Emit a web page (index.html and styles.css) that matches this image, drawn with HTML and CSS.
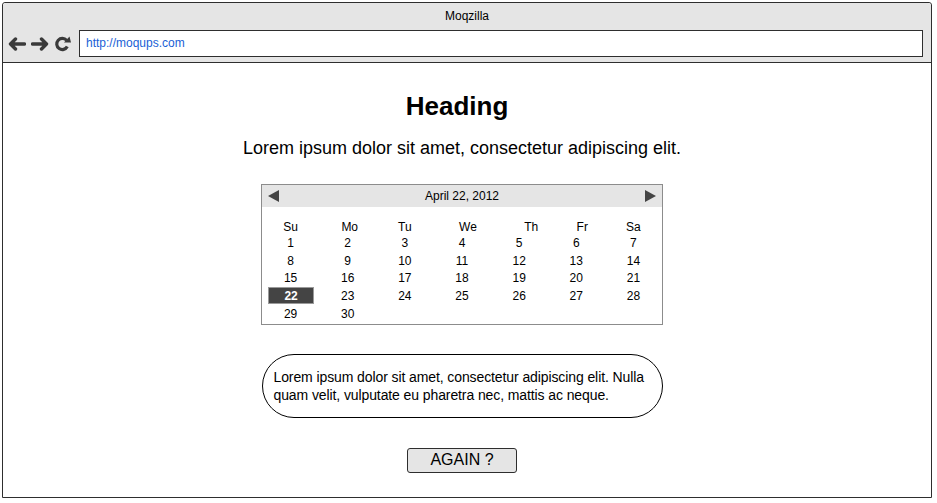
FILE: index.html
```html
<!DOCTYPE html>
<html>
<head>
<meta charset="utf-8">
<link rel="stylesheet" href="styles.css">
</head>
<body>
<div class="browser">
  <div class="chrome">
    <div class="title">Moqzilla</div>
    <div class="nav">
      <svg class="icon" width="18" height="14" viewBox="0 0 18 14"><path d="M2.5 7 L7.5 2 M2.5 7 L7.5 12 M2.5 7 L16.5 7" stroke="#3a3a3a" stroke-width="3.4" fill="none" stroke-linecap="round" stroke-linejoin="round"/></svg>
      <svg class="icon" width="18" height="14" viewBox="0 0 18 14"><path d="M15.5 7 L10.5 2 M15.5 7 L10.5 12 M15.5 7 L1.5 7" stroke="#3a3a3a" stroke-width="3.4" fill="none" stroke-linecap="round" stroke-linejoin="round"/></svg>
      <svg class="icon reload" width="18" height="16" viewBox="0 0 18 16"><path d="M13.3 10.6 A5.6 5.6 0 1 1 12.6 4.3" stroke="#3a3a3a" stroke-width="3.2" fill="none"/><path d="M10 6.5 L17 6.5 L15.5 0.5 Z" fill="#3a3a3a"/></svg>
      <div class="address">http://moqups.com</div>
    </div>
  </div>
  <div class="content">
    <h1 class="heading">Heading</h1>
    <p class="lead">Lorem ipsum dolor sit amet, consectetur adipiscing elit.</p>
    <div class="calendar">
      <div class="cal-head">
        <span class="arrow left"></span>
        <span class="month">April 22, 2012</span>
        <span class="arrow right"></span>
      </div>
      <div class="cal-grid">
        <div class="dn">Su</div><div class="dn mo">Mo</div><div class="dn">Tu</div><div class="dn we">We</div><div class="dn th">Th</div><div class="dn fr">Fr</div><div class="dn">Sa</div>
        <div>1</div><div>2</div><div>3</div><div>4</div><div>5</div><div>6</div><div>7</div>
        <div>8</div><div>9</div><div>10</div><div>11</div><div>12</div><div>13</div><div>14</div>
        <div>15</div><div>16</div><div>17</div><div>18</div><div>19</div><div>20</div><div>21</div>
        <div class="sel">22</div><div>23</div><div>24</div><div>25</div><div>26</div><div>27</div><div>28</div>
        <div>29</div><div>30</div>
      </div>
    </div>
    <div class="bubble">Lorem ipsum dolor sit amet, consectetur adipiscing elit. Nulla quam velit, vulputate eu pharetra nec, mattis ac neque.</div>
    <button class="btn">AGAIN ?</button>
  </div>
</div>
</body>
</html>
```

FILE: styles.css
```css
html, body {
  margin: 0;
  padding: 0;
  background: #ffffff;
}
body {
  font-family: "Liberation Sans", Arial, sans-serif;
  color: #000;
}
.browser {
  margin: 2px 0 0 2px;
  width: 928px;
  height: 494px;
  border: 1px solid #2e2e2e;
  border-top-left-radius: 3px;
  border-top-right-radius: 3px;
  display: flex;
  flex-direction: column;
}
.chrome {
  background: #e5e5e5;
  height: 59px;
  border-bottom: 1px solid #2e2e2e;
  display: flex;
  flex-direction: column;
  border-top-left-radius: 3px;
  border-top-right-radius: 3px;
}
.title {
  font-size: 12px;
  text-align: center;
  line-height: 14px;
  padding-top: 6px;
  height: 14px;
}
.nav {
  display: flex;
  align-items: center;
  padding: 7px 8px 0 5px;
  height: 27px;
}
.icon { flex: none; margin-right: 5px; }
.reload { margin-left: 0; margin-right: 7px; }
.address {
  flex: 1;
  height: 25px;
  border: 1px solid #2e2e2e;
  background: #fff;
  font-size: 12px;
  line-height: 25px;
  padding-left: 6px;
  color: #1a5fd6;
}
.content {
  flex: 1;
  display: flex;
  flex-direction: column;
  align-items: center;
  padding-right: 10px;
}
.heading {
  font-size: 26px;
  font-weight: bold;
  margin: 27px 10px 0 0;
  line-height: 32px;
}
.lead {
  font-size: 18px;
  margin: 15px 0 0 0;
  line-height: 22px;
}
.calendar {
  margin-top: 25px;
  width: 400px;
  border: 1px solid #8c8c8c;
  font-size: 12px;
}
.cal-head {
  background: #e5e5e5;
  height: 22px;
  display: flex;
  align-items: center;
  justify-content: space-between;
  padding: 0 6px;
}
.month { font-size: 12px; }
.arrow {
  width: 0; height: 0;
  border-top: 6px solid transparent;
  border-bottom: 6px solid transparent;
}
.arrow.left { border-right: 11px solid #444; }
.arrow.right { border-left: 11px solid #444; }
.cal-grid {
  display: grid;
  grid-template-columns: repeat(7, 1fr);
  grid-template-rows: 15px;
  grid-auto-rows: 17.75px;
  padding: 12px 0 1px 0;
}
.cal-grid > div {
  display: flex;
  align-items: center;
  justify-content: center;
}
.cal-grid > .mo { padding-left: 4px; }
.cal-grid > .we { padding-left: 12px; }
.cal-grid > .th { padding-left: 24px; }
.cal-grid > .fr { padding-left: 12px; }
.sel {
  background: #444;
  color: #fff;
  font-weight: bold;
  border: 1px solid #9a9a9a;
  margin: 0 5px 0 6px;
  box-sizing: border-box;
  height: 17px;
}
.bubble {
  margin-top: 29px;
  width: 388px;
  height: 36px;
  padding: 13px 0 13px 11px;
  border: 1px solid #000;
  border-radius: 32px;
  font-size: 14px;
  line-height: 18px;
  letter-spacing: -0.1px;
}
.btn {
  margin-top: 30px;
  width: 110px;
  height: 25px;
  background: #e5e5e5;
  border: 1px solid #2e2e2e;
  border-radius: 3px;
  font-family: "Liberation Sans", Arial, sans-serif;
  font-size: 16px;
  padding: 0;
  color: #000;
}
```
